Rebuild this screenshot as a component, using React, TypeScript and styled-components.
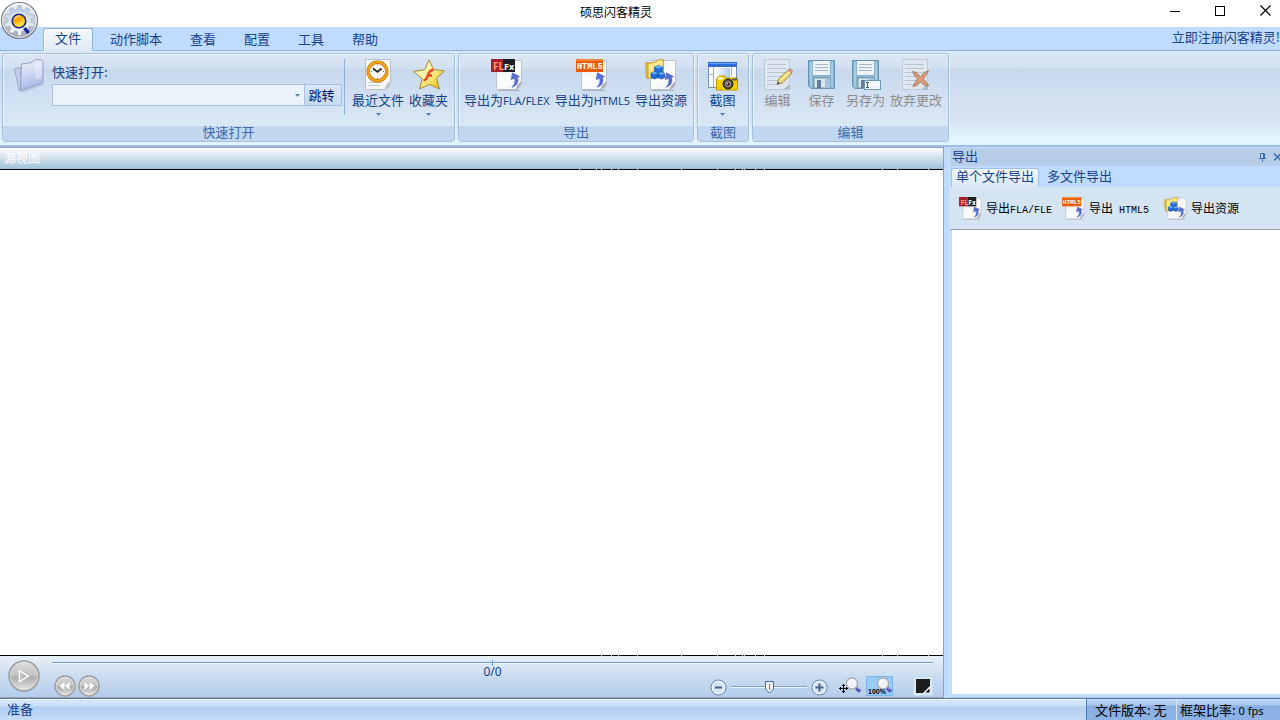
import React from 'react';
import styled, { createGlobalStyle, css } from 'styled-components';

const GlobalStyle = createGlobalStyle`
  * { box-sizing: border-box; }
  body {
    margin: 0;
    background: #bfdbff;
    font-family: 'Noto Sans CJK SC', sans-serif;
    font-size: 13px;
    line-height: 18px;
    color: #15428b;
  }
  button, input { font: inherit; color: inherit; margin: 0; padding: 0; border: 0; background: none; }
  svg { display: block; flex: none; }
`;

const Window = styled.div`
  display: flex;
  flex-direction: column;
  min-height: 100vh;
  overflow: hidden;
`;

/* ---------- title bar ---------- */

const TitleBar = styled.header`
  position: relative;
  display: flex;
  justify-content: center;
  height: 27px;
  padding-right: 48px;
  background: #fff;
`;

const Title = styled.h1`
  margin: 0;
  font-size: 12px;
  font-weight: 400;
  line-height: 24px;
  color: #000;
`;

const AppButton = styled.button`
  position: absolute;
  left: 0;
  top: 1px;
  z-index: 2;
`;

const WindowControls = styled.div`
  position: absolute;
  right: 9px;
  top: 0;
  display: flex;
  gap: 35px;
  height: 21px;
`;

const WindowButton = styled.button`
  display: flex;
  align-items: center;
`;

/* ---------- ribbon ---------- */

const TabBar = styled.nav`
  display: flex;
  height: 24px;
  padding-left: 43px;
  border-bottom: 1px solid #8db2e3;
  background: #bfdbff;
`;

const Tab = styled.button<{ $active?: boolean }>`
  height: 23px;
  padding: 0 14px;
  line-height: 22px;
  ${p => p.$active && css`
    display: flex;
    height: 23px;
    margin: 1px 3px 0 0;
    padding: 0 11px;
    line-height: 18px;
    border: 1px solid #8db2e3;
    border-bottom: 0;
    border-radius: 3px 3px 0 0;
    background: linear-gradient(#f5f9fe, #dfe9f5);
    box-shadow: inset 1px 1px 0 #fff, 1px 0 0 #b4e4f4, -1px 0 0 #b4e4f4;
  `}
`;

const RegisterLink = styled.a`
  margin-left: auto;
  line-height: 20px;
  color: #15428b;
  text-decoration: none;
`;

const Ribbon = styled.div`
  display: flex;
  gap: 3px;
  height: 96px;
  padding: 2px 2px 3px;
  border-bottom: 2px solid #9dbfe4;
  background: linear-gradient(#dbe7f4 0, #d5e2f1 16px, #c9d9ed 17px, #d7e4f3 70px, #e5f6ff 88px, #dff3fd 94px);
`;

const Group = styled.section`
  display: flex;
  flex-direction: column;
  height: 89px;
  border: 1px solid #a3c1dc;
  border-radius: 3px;
  background: linear-gradient(#dce7f4 0, #d3e0f0 14px, #c8d8ed 15px, #dae8f5 72px);
  box-shadow: inset 1px 1px 0 #e9f1fa, 1px 1px 0 #e6f3fc;
`;

const GroupBody = styled.div`
  display: flex;
  flex: 1;
  gap: 1px;
  padding: 5px 4px 0 3px;
`;

const GroupLabel = styled.h2`
  margin: 0;
  height: 15px;
  font-size: 13px;
  font-weight: 400;
  line-height: 12px;
  text-align: center;
  color: #3e6aaa;
  background: #c1d8f0;
`;

const ToolButton = styled.button`
  display: flex;
  flex-direction: column;
  align-items: center;
  min-width: 43px;
  height: 66px;
  padding: 0 2px;
  white-space: nowrap;
  &:disabled { color: #8d8d8d; }
`;

const ToolLabel = styled.span`
  display: block;
  height: 22px;
  line-height: 18px;
`;

const Latin = styled.span`
  font-family: 'Noto Sans', sans-serif;
  font-size: 11px;
  line-height: 1;
`;

const QuickOpen = styled.div`
  display: flex;
  gap: 6px;
  width: 339px;
  margin-right: 4px;
  padding-left: 8px;
`;

const QuickFields = styled.div`
  flex: 1;
  height: 56px;
  padding: 4px 2px 0 0;
  border-right: 1px solid #8fb0d8;
`;

const QuickLabel = styled.label`
  display: block;
  height: 21px;
  line-height: 18px;
`;

const ComboRow = styled.div`
  display: flex;
  height: 22px;
`;

const Combo = styled.div`
  display: flex;
  flex: 1;
  border: 1px solid #abc1de;
  background: #eaf2fb;
  input { flex: 1; min-width: 0; padding: 0 4px; outline: 0; }
`;

const ComboArrow = styled.button`
  display: flex;
  align-items: center;
  justify-content: center;
  width: 14px;
`;

const GoButton = styled.button`
  width: 37px;
  padding-right: 3px;
  border: 1px solid #a3bfe3;
  border-left: 0;
  line-height: 16px;
  color: #00156e;
  background: linear-gradient(#d8e6f8, #c6daf5);
`;

/* ---------- work area ---------- */

const Workspace = styled.div`
  display: flex;
  flex: 1;
  gap: 5px;
`;

const SourceView = styled.main`
  display: flex;
  flex: 1;
  flex-direction: column;
  min-width: 0;
  border-top: 1px solid #9a9fa8;
  border-right: 1px solid #9a9fa8;
`;

const SourceTitle = styled.h2`
  margin: 0;
  height: 21px;
  padding-left: 4px;
  font-size: 12px;
  font-weight: 400;
  line-height: 20px;
  color: #fff;
  background: linear-gradient(#fdfeff, #cfdfea 50%, #9fc0da);
`;

const EdgeLine = styled.div`
  display: flex;
  justify-content: flex-end;
  height: 1px;
  background: #000;
`;

const Stage = styled.div`
  flex: 1;
  background: #fff;
`;

const Player = styled.div`
  display: flex;
  gap: 12px;
  height: 42px;
  padding: 4px 10px 0 8px;
  border-bottom: 1px solid #9a9fa8;
  background: linear-gradient(#e6eff6, #cbdcf0 50%, #b4cdec);
`;

const PlayerMain = styled.div`
  flex: 1;
  min-width: 0;
`;

const Progress = styled.input`
  display: block;
  width: 100%;
  height: 6px;
  appearance: none;
  background: linear-gradient(transparent 2px, #6a9bd8 2px 3px, #f4f8fd 3px 4px, transparent 4px);
  &::-webkit-slider-thumb { appearance: none; width: 1px; height: 6px; background: #6a9bd8; }
`;

const PlayerRow = styled.div`
  display: grid;
  grid-template-columns: 1fr auto 1fr;
`;

const SeekButtons = styled.div`
  display: flex;
  gap: 2px;
  padding: 9px 0 0 2px;
`;

const RoundButton = styled.button`
  display: block;
  align-self: flex-start;
`;

const Counter = styled.output`
  height: 14px;
  line-height: 12px;
  font-family: 'Noto Sans', sans-serif;
  font-size: 12px;
`;

const ZoomTools = styled.div`
  display: flex;
  align-items: flex-end;
  justify-content: flex-end;
  height: 21px;
  margin-top: 9px;
`;

const thumb = encodeURIComponent(
  '<svg xmlns="http://www.w3.org/2000/svg" width="9" height="14"><path d="M.5 1.500 H8.500 V9 L4.500 13 L.5 9 Z" fill="#f4f8fd" stroke="#44699e"/><path d="M4.500 4 V10" stroke="#5577a8"/></svg>'
);

const ZoomRange = styled.input`
  width: 76px;
  height: 14px;
  margin: 0 4px 2px;
  appearance: none;
  background: linear-gradient(transparent 6px, #7f9fd0 6px 7px, #eef4fc 7px 8px, transparent 8px);
  &::-webkit-slider-thumb {
    appearance: none;
    width: 9px;
    height: 14px;
    background: url("data:image/svg+xml,${thumb}") no-repeat;
  }
`;

const ZoomModes = styled.div`
  display: flex;
  margin: 0 20px 0 11px;
`;

const ZoomMode = styled.button<{ $on?: boolean }>`
  width: 27px;
  height: 20px;
  background: ${p => (p.$on ? '#9acbf5' : 'none')};
  box-shadow: ${p => (p.$on ? 'inset 0 0 0 1px #7fb6ea' : 'none')};
`;

const ColorButton = styled.button`
  display: flex;
  align-items: center;
  justify-content: center;
  width: 20px;
  height: 20px;
  border: 1px solid #bcdaf3;
  background: #dbe9f3;
`;

/* ---------- export panel ---------- */

const ExportPanel = styled.aside`
  display: flex;
  flex-direction: column;
  width: 331px;
  padding: 1px 0 3px;
  border-left: 1px solid #d5e4f2;
  border-bottom: 1px solid #a8c4e6;
`;

const PanelTitle = styled.div`
  display: flex;
  align-items: center;
  justify-content: space-between;
  height: 18px;
  padding-left: 2px;
  background: #b7cde8;
  h2 { margin: 0; height: 18px; font-size: 13px; font-weight: 400; line-height: 15px; }
`;

const PanelControls = styled.div`
  display: flex;
  gap: 8px;
`;

const PanelTabs = styled.div`
  display: flex;
  height: 21px;
  padding: 2px 0 0 1px;
`;

const PanelTab = styled.button<{ $active?: boolean }>`
  height: 19px;
  padding: 0 8px;
  line-height: 15px;
  display: flex;
  ${p => p.$active && css`
    padding: 0 4px;
    border: 1px solid #9cc3ec;
    border-bottom: 0;
    border-radius: 3px 3px 0 0;
    line-height: 13px;
    background: linear-gradient(#f4f9fe, #d8e6f3);
  `}
`;

const PanelToolbar = styled.div`
  display: flex;
  gap: 10px;
  height: 43px;
  padding-left: 9px;
  border-bottom: 1px solid #9a9fa8;
  background: #d5e4f2;
`;

const PanelButton = styled.button`
  display: flex;
  align-items: center;
  gap: 4px;
  min-width: 92px;
  color: #000;
  font-size: 12px;
  white-space: nowrap;
`;

const Mono = styled.span`
  font-family: 'Liberation Mono', monospace;
  font-size: 10px;
  line-height: 1;
  white-space: pre;
`;

const PanelBody = styled.div`
  flex: 1;
  margin-left: 2px;
  background: #fff;
`;

/* ---------- status bar ---------- */

const StatusBar = styled.footer`
  display: flex;
  height: 22px;
  border-top: 1px solid #567db0;
  background: linear-gradient(#fff 0 1px, #d6e7fc 1px, #c9defa 7px, #b0cdf3 8px, #c6dcf9);
`;

const StatusText = styled.div`
  flex: 1;
  padding-left: 7px;
  line-height: 20px;
`;

const StatusCell = styled.div<{ $width: number }>`
  width: ${p => p.$width}px;
  padding-left: ${p => (p.$width > 100 ? 3 : 8)}px;
  border-left: 1px solid ${p => (p.$width > 100 ? '#d5e6fb' : '#567db0')};
  line-height: 21px;
  color: #000;
  background: linear-gradient(#c4daf7, #a9c7ef 6px, #88aee2 7px, #8db2e6);
`;

/* ---------- icons ---------- */

const AppIcon = () => (
  <svg width="39" height="39" viewBox="0 0 39 39">
    <defs>
      <linearGradient id="orb" x1="0" y1="0" x2="0" y2="1">
        <stop offset="0" stopColor="#f4f6f8" /><stop offset=".5" stopColor="#c9ced4" /><stop offset="1" stopColor="#9ba3ad" />
      </linearGradient>
      <linearGradient id="lens" x1="0" y1="0" x2=".4" y2="1">
        <stop offset="0" stopColor="#ff8200" /><stop offset=".5" stopColor="#ffab00" /><stop offset="1" stopColor="#fff05a" />
      </linearGradient>
      <linearGradient id="cog" gradientUnits="userSpaceOnUse" x1="0" y1="4" x2="0" y2="35">
        <stop offset="0" stopColor="#a9c6e6" /><stop offset=".45" stopColor="#d5e3f1" /><stop offset="1" stopColor="#ffffff" />
      </linearGradient>
    </defs>
    <circle cx="19.500" cy="19.500" r="18" fill="url(#orb)" stroke="#737c88" strokeWidth="1.200" />
    <circle cx="19.500" cy="19.500" r="16.800" fill="none" stroke="#fff" opacity=".8" />
    <path
      d="M17.500 8.500 L18 4.500 H21 L21.500 8.500 L24 9.500 L26.800 6.500 L29.500 8.500 L27.800 12 L29.500 14 L33.500 13 L34.500 16.500 L31 18 V21 L34.500 22.500 L33.500 26 L29.500 25 L27.800 27 L29.500 30.500 L26.800 32.500 L24 29.500 L21.500 30.500 L21 34.500 H18 L17.500 30.500 L15 29.500 L12.200 32.500 L9.500 30.500 L11.200 27 L9.500 25 L5.500 26 L4.500 22.500 L8 21 V18 L4.500 16.500 L5.500 13 L9.500 14 L11.200 12 L9.500 8.500 L12.200 6.500 L15 9.500 Z"
      fill="url(#cog)" stroke="#8b98a8" strokeWidth=".4"
    />
    <circle cx="19.500" cy="19.500" r="8.800" fill="#e3e7ec" />
    <path d="M24.500 27 L28.500 32" stroke="#16249a" strokeWidth="3.600" />
    <circle cx="19" cy="20" r="6.800" fill="url(#lens)" stroke="#1f2a80" strokeWidth="1.600" />
    <path d="M14.800 18 Q16 14.800 20 15.200" stroke="#ffd88a" strokeWidth="1.300" fill="none" />
  </svg>
);

const FolderIcon = () => (
  <svg width="32" height="34" viewBox="0 0 32 34">
    <defs>
      <linearGradient id="folder" x1=".3" y1="0" x2=".5" y2="1">
        <stop offset="0" stopColor="#eceffa" /><stop offset=".5" stopColor="#ccd4f2" /><stop offset="1" stopColor="#a3b1e4" />
      </linearGradient>
    </defs>
    <path d="M8 33 L30 25" stroke="#90a0b8" strokeWidth="1.500" opacity=".4" />
    <path d="M.5 9.500 L7 8.500 V31 L5 31.500 Z" fill="#c3cdea" stroke="#909dbe" strokeWidth=".8" />
    <path d="M7.500 5 L18 3.500 L20.500 .8 L27.500 .6 L29 2.500 V23.500 L6.500 31.800 Z" fill="url(#folder)" stroke="#8b9ac4" strokeWidth=".9" />
    <path d="M20.500 5 L27.500 2.500 L28 18 L22 21 Z" fill="#fff" opacity=".3" />
  </svg>
);

const RecentIcon = () => (
  <svg width="32" height="32" viewBox="0 0 32 32">
    <path d="M3.500 .5 H28.500 V24 Q28 29.500 22 30.500 H3.500 Z" fill="#f7f7f8" stroke="#b9bfc7" />
    <path d="M6 23.500 H20 M6 26.500 H18" stroke="#c8ccd2" />
    <path d="M28 23 Q24 24 23 30 Q28 28 28 23Z" fill="#b4bac2" />
    <circle cx="15.500" cy="12.500" r="9.300" fill="#fff" stroke="#b06a00" strokeWidth="3.400" />
    <circle cx="15.500" cy="12.500" r="9.300" fill="none" stroke="#f7a814" strokeWidth="2.300" />
    <path d="M11 9.500 L15.500 13 L19.500 9.500" fill="none" stroke="#202020" strokeWidth="1.700" />
    <path d="M15.500 5.500 V6.500 M15.500 18.500 V19.500 M9 12.500 H10 M21 12.500 H22" stroke="#777" />
  </svg>
);

const StarIcon = () => (
  <svg width="32" height="32" viewBox="0 0 32 32">
    <defs>
      <linearGradient id="star" x1="0" y1="0" x2="1" y2="1">
        <stop offset="0" stopColor="#fffef0" /><stop offset=".45" stopColor="#fdf3a0" /><stop offset="1" stopColor="#e7b900" />
      </linearGradient>
    </defs>
    <path d="M16 .8 L20.500 10.500 L31.300 12 L23.500 19.300 L26.300 30 L16.500 25.300 L6.700 30 L9 19.500 L.8 12.500 L11.700 10.800 Z" fill="url(#star)" stroke="#a8882c" strokeLinejoin="round" />
    <path d="M20.500 11 Q16.500 11 15 16 Q13.500 21 10.500 21.500 M14 16.500 H19" fill="none" stroke="#e8472a" strokeWidth="2.600" />
  </svg>
);

const SheetShape = () => (
  <>
    <path d="M7 31.500 H29" stroke="#8f98a2" opacity=".6" />
    <path d="M5.500 1.500 H30.500 V24 Q30 29 25 30.500 H5.500 Z" fill="#f3f4f6" stroke="#bcc2ca" />
    <path d="M6 18 Q20 16 24 2 H30 V14 Q24 28 6 30Z" fill="#fff" opacity=".6" />
    <path d="M30.500 22 Q27 25 24 30.800 Q30 29 30.500 22Z" fill="#a3a9b1" />
    <path d="M21 28.300 Q25 24.500 23.800 19.500 L20 20.500 L21.500 13.800 L28.500 17.500 L26.600 18.500 Q28.500 26 21 28.300Z" fill="#566fd0" stroke="#4358b4" strokeWidth=".5" />
  </>
);

const FlashIcon = ({ size = 32 }: { size?: number }) => (
  <svg width={size} height={size} viewBox="0 0 32 32">
    <SheetShape />
    <rect x="0" y="0" width="12" height="13" fill="#a81f2b" />
    <rect x="12" y="0" width="12" height="13" fill="#1f1f21" />
    <text x="2" y="10.500" fontFamily="Open Sans" fontSize="10" fontWeight="700" fill="#ff9d6b">FL</text>
    <text x="13" y="10.500" fontFamily="Open Sans" fontSize="9" fontWeight="700" fill="#fff">Fx</text>
  </svg>
);

const HtmlIcon = ({ size = 32 }: { size?: number }) => (
  <svg width={size} height={size} viewBox="0 0 32 32">
    <SheetShape />
    <rect x="0" y="0" width="27" height="13" fill="#e85d04" />
    <rect x="0" y="0" width="27" height="2" fill="#f78a30" />
    <text x="1" y="10" fontFamily="Liberation Mono" fontSize="8.500" fontWeight="700" fill="#fff">HTML5</text>
  </svg>
);

const AssetIcon = ({ size = 32 }: { size?: number }) => (
  <svg width={size} height={size} viewBox="0 0 32 32">
    <SheetShape />
    <path d="M.5 4 L3 3 V20 L1.500 19 Z" fill="#f0cc3a" stroke="#bd951e" strokeWidth=".7" />
    <path d="M3 4.500 L11 3 L13 .8 H18.500 V17 L3 19.500 Z" fill="#fbe98b" stroke="#c79f23" />
    <g fill="#1f6fdc" stroke="#0d479d" strokeWidth=".7">
      <path d="M9.500 8 L13.500 6.500 L17.500 8 V12.500 L13.500 14 L9.500 12.500Z" />
      <path d="M6 14 L9.500 12.500 L13 14 V18.500 L9.500 20 L6 18.500Z" />
      <path d="M13 14.500 L16.500 13 L19.500 14.500 V18.500 L16.500 20 L13 18.500Z" />
    </g>
    <path d="M9.500 8 L13.500 6.500 L17.500 8 L13.500 9.500Z M6 14 L9.500 12.500 L13 14 L9.500 15.500Z M13 14.500 L16.500 13 L19.500 14.500 L16.500 16Z" fill="#69aef8" />
  </svg>
);

const CaptureIcon = () => (
  <svg width="32" height="32" viewBox="0 0 32 32">
    <defs>
      <linearGradient id="shot" x1="0" y1="0" x2="1" y2="0"><stop offset="0" stopColor="#fff" /><stop offset="1" stopColor="#a9cbf4" /></linearGradient>
    </defs>
    <rect x="1.500" y="3.500" width="28" height="25" fill="#fafcff" stroke="#7891ba" />
    <rect x="1" y="3" width="29" height="5" fill="#2f6bd6" />
    <rect x="2" y="4" width="27" height="1" fill="#6b9ff2" />
    <path d="M2 15.500 H6 M6.500 8 V28 M24.500 8 V17" stroke="#9eb0c9" />
    <rect x="8" y="9" width="15" height="18" fill="url(#shot)" />
    <path d="M9.500 20 L12 17 H18 L19.500 19 H30.500 V31 H9.500 Z" fill="#f6cf00" stroke="#c29a00" />
    <rect x="11" y="18" width="5" height="3" fill="#fff3a0" />
    <rect x="25" y="19.500" width="5" height="2" fill="#5a5a3c" />
    <circle cx="21" cy="25" r="5" fill="#4b463a" stroke="#231f18" />
    <circle cx="21" cy="25" r="3.200" fill="#8d8a80" />
    <circle cx="21" cy="25" r="1.700" fill="#2a1d1a" />
    <circle cx="20.500" cy="24.500" r=".8" fill="#fff" />
  </svg>
);

const LinesPage = () => (
  <>
    <path d="M2.500 .5 H27.500 V30.500 H2.500 Z" fill="#dfe8f1" stroke="#bccada" />
    <path d="M5 5.500 H24 M5 9.500 H24 M5 13.500 H24 M5 17.500 H20 M5 21.500 H18 M5 25.500 H16" stroke="#b7c6d6" />
    <path d="M22 30 L27.500 25 V30.500Z" fill="#a9b7c6" />
  </>
);

const EditIcon = () => (
  <svg width="32" height="32" viewBox="0 0 32 32">
    <LinesPage />
    <path d="M15 25.500 L16.500 20 L26 11 L30 14 L20.500 24 Z" fill="#e8d56a" stroke="#9f8d51" />
    <path d="M18.500 21.500 L28 12.500" stroke="#f8efb0" strokeWidth="1.500" />
    <path d="M26 11 L28 9.500 Q31 11 30.500 13 L29.500 14.500Z" fill="#e49a9a" stroke="#b78383" strokeWidth=".7" />
    <path d="M15 25.500 L15.800 22.500 L18 24.500Z" fill="#555" />
  </svg>
);

const DiskShape = () => (
  <>
    <path d="M2.500 1.500 H28.500 V29.500 H5 L2.500 27 Z" fill="#87b3d0" stroke="#6696b6" />
    <path d="M4 3 H6 V28 H4Z M25 3 H27 V28 H25Z" fill="#a9cbe0" />
    <rect x="7" y="2" width="17" height="14" fill="#edf2f7" />
    <path d="M9 5.500 H22 M9 8.500 H22 M9 11.500 H22" stroke="#a4b7c9" />
    <rect x="8" y="19" width="16" height="10" fill="#dbe5ed" stroke="#6f93ab" />
    <path d="M11 21 H15 V29 H11Z" fill="#5f7f94" />
    <path d="M19 20 H24 V29 H19Z" fill="#a3c4d9" />
  </>
);

const SaveIcon = () => <svg width="32" height="32" viewBox="0 0 32 32"><DiskShape /></svg>;

const SaveAsIcon = () => (
  <svg width="32" height="32" viewBox="0 0 32 32">
    <DiskShape />
    <rect x="14.500" y="21.500" width="16" height="9" fill="#f1f6fa" stroke="#6c96b6" />
    <path d="M16 23.500 H19 M16 28.500 H19 M17.500 23.500 V28.500" stroke="#4c5a68" />
  </svg>
);

const DiscardIcon = () => (
  <svg width="32" height="32" viewBox="0 0 32 32">
    <LinesPage />
    <path d="M12.500 12.500 Q15.500 12 20.500 17.500 Q24.500 12.500 28.500 11.500 Q27 15 23.500 19.800 Q26.500 24 29 26.500 Q26 28.500 20.500 23 Q17 27.500 13 27.500 Q14 24 17.500 20 Q14 16 12.500 12.500Z" fill="#dd9c78" stroke="#a08070" />
  </svg>
);

const DownArrow = () => (
  <svg width="5" height="3" viewBox="0 0 5 3"><path d="M0 0 H5 L2.500 3 Z" fill="#557fb5" /></svg>
);

const PlayIcon = () => (
  <svg width="32" height="32" viewBox="0 0 32 32">
    <defs>
      <linearGradient id="metal" x1="0" y1="0" x2="0" y2="1">
        <stop offset="0" stopColor="#dedede" /><stop offset=".5" stopColor="#c2c2c2" /><stop offset=".52" stopColor="#aaa" /><stop offset="1" stopColor="#e9e9e9" />
      </linearGradient>
    </defs>
    <circle cx="16" cy="16" r="15" fill="url(#metal)" stroke="#9b9b9b" strokeWidth="1.500" />
    <circle cx="16" cy="16" r="13.600" fill="none" stroke="#e2e2e2" opacity=".7" />
    <path d="M11.500 11 V21.500 L20.500 16.200 Z" fill="#bcbcbc" stroke="#fff" strokeWidth="1.300" />
  </svg>
);

const SeekIcon = ({ forward }: { forward?: boolean }) => (
  <svg width="22" height="22" viewBox="0 0 22 22">
    <circle cx="11" cy="11" r="10" fill="url(#metal)" stroke="#9b9b9b" strokeWidth="1.400" />
    <circle cx="11" cy="11" r="8.800" fill="none" stroke="#e6e6e6" opacity=".7" />
    <path d={forward ? 'M6.500 7 L11 11 L6.500 15Z M11.500 7 L16.500 11 L11.500 15Z' : 'M10.500 7 L5.500 11 L10.500 15Z M15.500 7 L11 11 L15.500 15Z'} fill="#fff" />
  </svg>
);

const StepIcon = ({ plus }: { plus?: boolean }) => (
  <svg width="17" height="17" viewBox="0 0 17 17">
    <circle cx="8.500" cy="8.500" r="7.500" fill="#d5e4f6" stroke="#5c7da8" />
    <circle cx="8.500" cy="8.500" r="6.300" fill="none" stroke="#fff" />
    <path d={plus ? 'M4.500 8.500 H12.500 M8.500 4.500 V12.500' : 'M5 8.500 H12'} stroke="#4a6387" strokeWidth="2" />
  </svg>
);

const Lens = () => (
  <>
    <path d="M19 12 L23 15.500" stroke="#4b4bb8" strokeWidth="3.200" />
    <path d="M20 12 L22.500 14" stroke="#a6a6f0" />
    <circle cx="15" cy="7.500" r="5.600" fill="#f1f2f4" stroke="#a9aeb5" strokeWidth="1.500" />
    <path d="M12 6.500 Q13 4 16 4.500" stroke="#fff" strokeWidth="1.500" fill="none" />
  </>
);

const ZoomFitIcon = () => (
  <svg width="27" height="20" viewBox="0 0 27 20">
    <g transform="translate(-2 0)"><Lens /></g>
    <path d="M0 12.500 H9 M4.500 8 V17 M3 9.500 H6 M3 15.500 H6 M1.500 11 V14 M7.500 11 V14" stroke="#000" />
  </svg>
);

const ZoomFullIcon = () => (
  <svg width="27" height="20" viewBox="0 0 27 20">
    <g transform="translate(2 0)"><Lens /></g>
    <text x="2" y="18" fontFamily="Liberation Sans" fontSize="7" fontWeight="700" fill="#000">100%</text>
  </svg>
);

/* small breaks in the black rules that frame the stage, measured from their right end */
const BREAKS = [15, 46, 61, 179, 188, 199, 201, 208, 226, 262, 306, 325, 332, 342, 347, 364];

const BrokenLine = ({ count }: { count: number }) => (
  <EdgeLine>
    <svg width="400" height="1" viewBox="0 0 400 1">
      {BREAKS.slice(0, count).map(x => <rect key={x} x={400 - x} y="0" width="1" height="1" fill="#ccc" />)}
    </svg>
  </EdgeLine>
);

export default function App() {
  return (
    <Window>
      <GlobalStyle />
      <TitleBar>
        <AppButton aria-label="应用菜单"><AppIcon /></AppButton>
        <Title>硕思闪客精灵</Title>
        <WindowControls>
          <WindowButton aria-label="最小化">
            <svg width="10" height="10"><path d="M0 5.500 H10" stroke="#000" /></svg>
          </WindowButton>
          <WindowButton aria-label="最大化">
            <svg width="10" height="10"><rect x=".5" y=".5" width="9" height="9" fill="none" stroke="#000" /></svg>
          </WindowButton>
          <WindowButton aria-label="关闭">
            <svg width="11" height="11"><path d="M.5 .5 L10.500 10.500 M10.500 .5 L.5 10.500" stroke="#000" strokeWidth="1.200" /></svg>
          </WindowButton>
        </WindowControls>
      </TitleBar>

      <TabBar>
        <Tab $active>文件</Tab>
        <Tab>动作脚本</Tab>
        <Tab>查看</Tab>
        <Tab>配置</Tab>
        <Tab>工具</Tab>
        <Tab>帮助</Tab>
        <RegisterLink href="#register">立即注册闪客精灵!</RegisterLink>
      </TabBar>

      <Ribbon>
        <Group>
          <GroupBody>
            <QuickOpen>
              <FolderIcon />
              <QuickFields>
                <QuickLabel htmlFor="quick-path">快速打开:</QuickLabel>
                <ComboRow>
                  <Combo>
                    <input id="quick-path" type="text" />
                    <ComboArrow aria-label="展开"><DownArrow /></ComboArrow>
                  </Combo>
                  <GoButton>跳转</GoButton>
                </ComboRow>
              </QuickFields>
            </QuickOpen>
            <ToolButton><RecentIcon /><ToolLabel>最近文件</ToolLabel><DownArrow /></ToolButton>
            <ToolButton><StarIcon /><ToolLabel>收藏夹</ToolLabel><DownArrow /></ToolButton>
          </GroupBody>
          <GroupLabel>快速打开</GroupLabel>
        </Group>
        <Group>
          <GroupBody>
            <ToolButton><FlashIcon /><ToolLabel>导出为<Latin>FLA/FLEX</Latin></ToolLabel></ToolButton>
            <ToolButton><HtmlIcon /><ToolLabel>导出为<Latin>HTML5</Latin></ToolLabel></ToolButton>
            <ToolButton><AssetIcon /><ToolLabel>导出资源</ToolLabel></ToolButton>
          </GroupBody>
          <GroupLabel>导出</GroupLabel>
        </Group>
        <Group>
          <GroupBody>
            <ToolButton><CaptureIcon /><ToolLabel>截图</ToolLabel><DownArrow /></ToolButton>
          </GroupBody>
          <GroupLabel>截图</GroupLabel>
        </Group>
        <Group>
          <GroupBody>
            <ToolButton disabled><EditIcon /><ToolLabel>编辑</ToolLabel></ToolButton>
            <ToolButton disabled><SaveIcon /><ToolLabel>保存</ToolLabel></ToolButton>
            <ToolButton disabled><SaveAsIcon /><ToolLabel>另存为</ToolLabel></ToolButton>
            <ToolButton disabled><DiscardIcon /><ToolLabel>放弃更改</ToolLabel></ToolButton>
          </GroupBody>
          <GroupLabel>编辑</GroupLabel>
        </Group>
      </Ribbon>

      <Workspace>
        <SourceView>
          <SourceTitle>源视图</SourceTitle>
          <BrokenLine count={16} />
          <Stage />
          <BrokenLine count={14} />
          <Player>
            <RoundButton aria-label="播放"><PlayIcon /></RoundButton>
            <PlayerMain>
              <Progress type="range" aria-label="进度" defaultValue={50} />
              <PlayerRow>
                <SeekButtons>
                  <RoundButton aria-label="后退"><SeekIcon /></RoundButton>
                  <RoundButton aria-label="前进"><SeekIcon forward /></RoundButton>
                </SeekButtons>
                <Counter>0/0</Counter>
                <ZoomTools>
                  <button aria-label="缩小"><StepIcon /></button>
                  <ZoomRange type="range" aria-label="缩放" defaultValue={50} />
                  <button aria-label="放大"><StepIcon plus /></button>
                  <ZoomModes>
                    <ZoomMode aria-label="适合窗口"><ZoomFitIcon /></ZoomMode>
                    <ZoomMode $on aria-label="实际大小"><ZoomFullIcon /></ZoomMode>
                  </ZoomModes>
                  <ColorButton aria-label="背景颜色">
                    <svg width="14" height="14"><rect width="14" height="14" fill="#1d1d1d" /><path d="M7 14 L14 7 V14Z" fill="#fff" /><path d="M9.500 13.500 H13.500 V9.500Z" fill="#000" /></svg>
                  </ColorButton>
                </ZoomTools>
              </PlayerRow>
            </PlayerMain>
          </Player>
        </SourceView>

        <ExportPanel>
          <PanelTitle>
            <h2>导出</h2>
            <PanelControls>
              <button aria-label="固定">
                <svg width="7" height="9"><path d="M1.500 5 V.5 H5.500 V5 M4.500 1 V5 M0 5.500 H7 M3.500 6 V9" stroke="#3f6cae" fill="none" /></svg>
              </button>
              <button aria-label="关闭面板">
                <svg width="6" height="8"><path d="M0 .5 L7 7.500 M7 .5 L0 7.500" stroke="#3f6cae" strokeWidth="1.500" /></svg>
              </button>
            </PanelControls>
          </PanelTitle>
          <PanelTabs>
            <PanelTab $active>单个文件导出</PanelTab>
            <PanelTab>多文件导出</PanelTab>
          </PanelTabs>
          <PanelToolbar>
            <PanelButton><FlashIcon size={23} /><span>导出<Mono>FLA/FLE</Mono></span></PanelButton>
            <PanelButton><HtmlIcon size={23} /><span>导出<Mono> HTML5</Mono></span></PanelButton>
            <PanelButton><AssetIcon size={23} /><span>导出资源</span></PanelButton>
          </PanelToolbar>
          <PanelBody />
        </ExportPanel>
      </Workspace>

      <StatusBar>
        <StatusText>准备</StatusText>
        <StatusCell $width={90}>文件版本: 无</StatusCell>
        <StatusCell $width={104}>框架比率: <Latin>0 fps</Latin></StatusCell>
      </StatusBar>
    </Window>
  );
}
